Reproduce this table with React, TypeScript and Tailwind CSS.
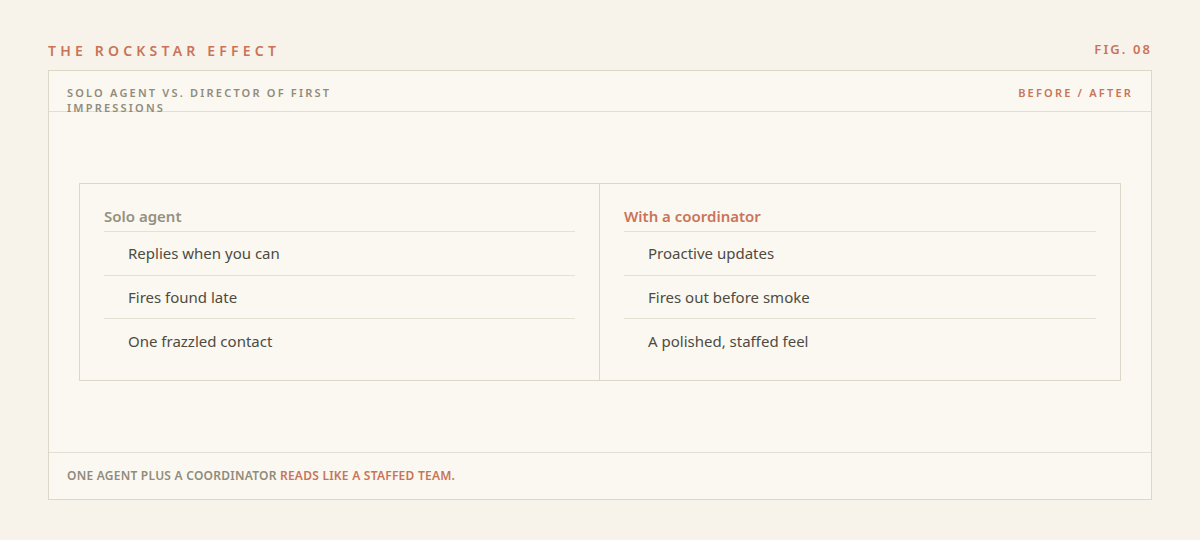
const SOLO = ["Replies when you can", "Fires found late", "One frazzled contact"];
const COORD = ["Proactive updates", "Fires out before smoke", "A polished, staffed feel"];

function Column({ title, items, accent, divider }: { title: string; items: string[]; accent?: boolean; divider?: boolean }) {
  return (
    <div className={`px-6 pt-[21px] pb-[17.5px] ${divider ? "border-r border-[#dcd7c7]" : ""}`}>
      <div
        className={`text-[15px] font-semibold leading-[22px] pb-[4px] border-b border-[#e6e1d5] ${
          accent ? "text-[#c97459]" : "text-[#94917f]"
        }`}
      >
        {title}
      </div>
      {items.map((item, i) => (
        <div
          key={item}
          className={`pl-6 h-[43.5px] flex items-center text-[15px] text-[#4d4b41] ${
            i < items.length - 1 ? "border-b border-[#e6e1d5]" : ""
          }`}
        >
          {item}
        </div>
      ))}
    </div>
  );
}

export default function App() {
  return (
    <div
      className="w-[1200px] h-[540px] bg-[#f7f3ea] px-12 pt-[41px]"
      style={{ fontFamily: '"Noto Sans", "Open Sans", sans-serif' }}
    >
      {/* ── Title row ── */}
      <div className="flex items-center justify-between h-[18px] mb-[11px]">
        <span className="text-[14px] font-semibold tracking-[0.3em] text-[#c97459]">THE ROCKSTAR EFFECT</span>
        <span className="text-[13px] font-semibold tracking-[0.16em] text-[#c97459]">FIG. 08</span>
      </div>

      {/* ── Panel ── */}
      <div className="h-[430px] border border-[#dcd7c7] bg-[#fbf8f1] flex flex-col">
        <div className="h-[41px] shrink-0 border-b border-[#e3ded2] px-[18px] pt-[14px] flex justify-between">
          <div className="w-[300px] text-[11px] font-semibold leading-[15px] tracking-[0.2em] text-[#8f8c7b]">
            SOLO AGENT VS. DIRECTOR OF FIRST IMPRESSIONS
          </div>
          <div className="text-[11px] font-semibold leading-[15px] tracking-[0.2em] text-[#c97459]">
            BEFORE / AFTER
          </div>
        </div>

        <div className="flex-1 flex items-center px-[30px]">
          <div className="w-full grid grid-cols-2 border border-[#dcd7c7]">
            <Column title="Solo agent" items={SOLO} divider />
            <Column title="With a coordinator" items={COORD} accent />
          </div>
        </div>

        <div className="h-[47px] shrink-0 border-t border-[#e3ded2] px-[18px] flex items-center">
          <span className="text-[12px] font-semibold tracking-[0.02em] text-[#8f8c7b]">
            ONE AGENT PLUS A COORDINATOR <span className="text-[#c97459]">READS LIKE A STAFFED TEAM.</span>
          </span>
        </div>
      </div>
    </div>
  );
}
